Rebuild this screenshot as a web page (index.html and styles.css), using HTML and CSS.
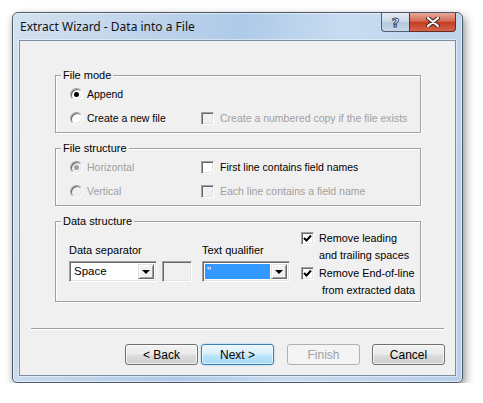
FILE: index.html
```html
<!DOCTYPE html>
<html lang="en">
<head>
    <meta charset="UTF-8">
    <title>Extract Wizard - Data into a File</title>
    <link rel="stylesheet" href="styles.css">
</head>
<body>
<div class="window">
    <div class="titlebar">
        <span class="title">Extract Wizard - Data into a File</span>
        <div class="caption">
            <span class="cbtn help">?</span>
            <span class="cbtn close">
                <svg width="14" height="10" viewBox="0 0 14 10"><path d="M2 1 L12 9 M12 1 L2 9" stroke="#3b2420" stroke-width="4" stroke-linecap="round"/><path d="M2 1 L12 9 M12 1 L2 9" stroke="#fff" stroke-width="2.2" stroke-linecap="round"/></svg>
            </span>
        </div>
    </div>
    <div class="client">
        <fieldset class="group">
            <legend>File mode</legend>
            <div class="rows">
                <label class="opt"><span class="radio on"></span>Append</label>
                <span></span>
                <label class="opt"><span class="radio"></span>Create a new file</label>
                <label class="opt dis"><span class="check"></span>Create a numbered copy if the file exists</label>
            </div>
        </fieldset>

        <fieldset class="group g2">
            <legend>File structure</legend>
            <div class="rows">
                <label class="opt dis"><span class="radio on"></span>Horizontal</label>
                <label class="opt"><span class="check"></span>First line contains field names</label>
                <label class="opt dis"><span class="radio"></span>Vertical</label>
                <label class="opt dis"><span class="check"></span>Each line contains a field name</label>
            </div>
        </fieldset>

        <fieldset class="group g3">
            <legend>Data structure</legend>
            <div class="datarow">
                <div class="col sep-col">
                    <span class="lbl">Data separator</span>
                    <div class="ctrls">
                        <div class="combo"><span class="val">Space</span><span class="arrow"></span></div>
                        <div class="textbox"></div>
                    </div>
                </div>
                <div class="col">
                    <span class="lbl">Text qualifier</span>
                    <div class="ctrls">
                        <div class="combo"><span class="val sel">"</span><span class="arrow"></span></div>
                    </div>
                </div>
                <div class="checks">
                    <label class="opt2"><span class="check on"><svg width="9" height="9" viewBox="0 0 9 9"><path d="M1 4 L3.5 6.5 L8 1.5" stroke="#000" stroke-width="2" fill="none"/></svg></span><span>Remove leading<br>and trailing spaces</span></label>
                    <label class="opt2"><span class="check on"><svg width="9" height="9" viewBox="0 0 9 9"><path d="M1 4 L3.5 6.5 L8 1.5" stroke="#000" stroke-width="2" fill="none"/></svg></span><span>Remove End-of-line<br>&nbsp;from extracted data</span></label>
                </div>
            </div>
        </fieldset>

        <div class="separator"></div>

        <div class="buttons">
            <button class="btn">&lt; Back</button>
            <button class="btn default">Next &gt;</button>
            <button class="btn disabled">Finish</button>
            <button class="btn">Cancel</button>
        </div>
    </div>
</div>
</body>
</html>
```

FILE: styles.css
```css
body {
    margin: 0;
    background: #fff;
    font-family: "Liberation Sans", Arial, sans-serif;
    font-size: 10.5px;
    color: #000;
}

.window {
    box-sizing: border-box;
    margin: 12px 0 0 12px;
    width: 451px;
    height: 371px;
    padding: 0 6px 6px 6px;
    border: 1px solid #4c5866;
    border-radius: 6px 6px 5px 5px;
    background: linear-gradient(100deg, #d2e1f0 0%, #bcd2ea 30%, #aecae8 45%, #c8dcf1 65%, #b8cfe9 100%);
    box-shadow: inset 0 0 0 1px rgba(255,255,255,.55), 2px 4px 10px rgba(0,0,0,.45);
}

.titlebar {
    display: flex;
    height: 27px;
}
.title {
    font-family: "Noto Sans", "Open Sans", sans-serif;
    font-size: 12px;
    line-height: 16px;
    margin: 6px 0 0 1px;
    color: #111;
}
.caption {
    display: flex;
    margin-left: auto;
    height: 19px;
}
.cbtn {
    box-sizing: border-box;
    height: 19px;
    display: flex;
    align-items: center;
    justify-content: center;
    border: 1px solid #4f5f72;
    border-top: none;
}
.help {
    width: 28px;
    border-radius: 0 0 0 4px;
    border-right: none;
    background: linear-gradient(#e4ecf5, #c9d7e7 50%, #b6c8dc 51%, #c8d8ea);
    font-family: "DejaVu Sans", sans-serif;
    font-size: 13px;
    font-weight: bold;
    color: #fff;
    -webkit-text-stroke: 1px #3f4c5c;
}
.close {
    width: 47px;
    border-radius: 0 0 4px 0;
    border-color: #6a2a20;
    background: linear-gradient(#e9a898, #d36b55 45%, #c23b22 52%, #d4654c);
}

.client {
    box-sizing: border-box;
    height: 336px;
    background: #f0f0f0;
    border: 1px solid #7c8c9e;
    box-shadow: 0 0 0 1px rgba(255,255,255,.45);
    padding: 28px 0 0 35px;
}

.group {
    margin: 0;
    padding: 0;
    width: 366px;
    box-sizing: border-box;
    border: 1px solid #a0a0a0;
    box-shadow: 1px 1px 0 #fff, inset 1px 1px 0 #fff;
    min-width: 0;
}
.group legend {
    margin-left: 5px;
    padding: 0 2px;
    line-height: 13px;
    font-size: 11px;
    background: #f0f0f0;
}
.g2, .g3 {
    margin-top: 9px;
}

.rows {
    display: grid;
    grid-template-columns: 131px 1fr;
    grid-auto-rows: 24px;
    padding: 0 0 2px 14px;
}
.opt {
    display: flex;
    align-items: center;
    gap: 4px;
    white-space: nowrap;
}
.opt .check {
    margin-right: 2px;
}
.dis {
    color: #a0a0a0;
}

.radio {
    box-sizing: border-box;
    position: relative;
    width: 13px;
    height: 13px;
    border-radius: 50%;
    border: 1px solid;
    border-color: #a0a0a0 #fff #fff #a0a0a0;
    box-shadow: inset 1px 1px 0 #696969, inset -1px -1px 0 #e3e3e3;
    background: #fff;
}
.radio.on::after {
    content: "";
    position: absolute;
    left: 3px;
    top: 3px;
    width: 5px;
    height: 5px;
    border-radius: 50%;
    background: #000;
}
.dis .radio {
    background: #f0f0f0;
}
.dis .radio.on::after {
    background: #a0a0a0;
}

.check {
    box-sizing: border-box;
    flex: none;
    width: 13px;
    height: 13px;
    border: 1px solid;
    border-color: #a0a0a0 #fff #fff #a0a0a0;
    box-shadow: inset 1px 1px 0 #696969, inset -1px -1px 0 #e3e3e3;
    background: #fff;
    display: flex;
    align-items: center;
    justify-content: center;
}
.dis .check {
    background: #f0f0f0;
}

.datarow {
    display: flex;
    padding: 2px 0 2px 13px;
}
.col {
    display: flex;
    flex-direction: column;
    padding-top: 14px;
}
.sep-col {
    width: 133px;
}
.lbl {
    line-height: 13px;
    font-size: 11px;
}
.ctrls {
    display: flex;
    gap: 5px;
    margin-top: 4px;
}
.combo {
    box-sizing: border-box;
    width: 88px;
    height: 21px;
    display: flex;
    align-items: center;
    padding: 2px;
    background: #fff;
    border: 1px solid;
    border-color: #a0a0a0 #fff #fff #a0a0a0;
    box-shadow: inset 1px 1px 0 #696969, inset -1px -1px 0 #e3e3e3;
}
.combo .val {
    flex: 1;
    height: 15px;
    line-height: 15px;
    padding-left: 2px;
    font-size: 11.5px;
}
.combo .val.sel {
    background: #3399ff;
    color: #fff;
    margin-right: 1px;
}
.arrow {
    box-sizing: border-box;
    position: relative;
    width: 16px;
    height: 15px;
    background: #f0f0f0;
    border: 1px solid;
    border-color: #e3e3e3 #696969 #696969 #e3e3e3;
    box-shadow: inset 1px 1px 0 #fff, inset -1px -1px 0 #a0a0a0;
}
.arrow::after {
    content: "";
    position: absolute;
    left: 3px;
    top: 5px;
    border-left: 4px solid transparent;
    border-right: 4px solid transparent;
    border-top: 4px solid #000;
}
.textbox {
    box-sizing: border-box;
    width: 30px;
    height: 21px;
    background: #f0f0f0;
    border: 1px solid;
    border-color: #a0a0a0 #fff #fff #a0a0a0;
    box-shadow: inset 1px 1px 0 #696969, inset -1px -1px 0 #e3e3e3;
}

.checks {
    display: flex;
    flex-direction: column;
    gap: 1px;
    margin-left: 11px;
    white-space: nowrap;
}
.opt2 {
    display: flex;
    gap: 5px;
    line-height: 17px;
    font-size: 10.8px;
}
.opt2 .check {
    margin-top: 2px;
}

.separator {
    margin: 26px 11px 0 -24px;
    border-top: 1px solid #a0a0a0;
    border-bottom: 1px solid #fff;
}

.buttons {
    display: flex;
    justify-content: flex-end;
    margin: 14px 10px 0 0;
}
.btn {
    box-sizing: border-box;
    width: 73px;
    height: 21px;
    padding: 0;
    font-family: "Liberation Sans", Arial, sans-serif;
    font-size: 12px;
    color: #000;
    border: 1px solid #707070;
    border-radius: 3px;
    background: linear-gradient(#f2f2f2, #ebebeb 48%, #dddddd 52%, #cfcfcf);
    box-shadow: inset 0 0 0 1px rgba(255,255,255,.7);
}
.btn + .btn {
    margin-left: 12px;
}
.btn.default {
    margin-left: 3px;
    border-color: #3c7fb1;
    background: linear-gradient(#eaf6fd, #d9f0fc 48%, #bee6fd 52%, #a7d9f5);
    box-shadow: inset 0 0 0 1px rgba(255,255,255,.6), 0 0 2px #7ac6f0;
}
.btn.disabled {
    margin-left: 13px;
    color: #a0a0a0;
    border-color: #adb2b5;
    background: #f4f4f4;
    box-shadow: none;
}
```
